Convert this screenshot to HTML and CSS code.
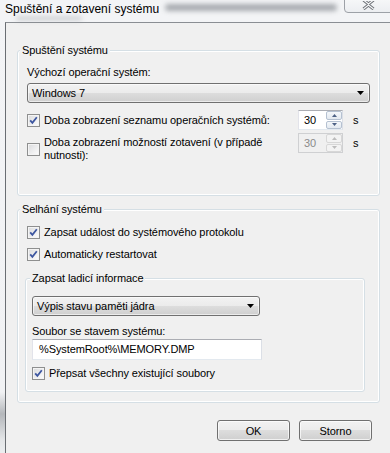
FILE: index.html
```html
<!DOCTYPE html>
<html lang="cs">

<head>
  <meta charset="UTF-8">
  <meta name="viewport" content="width=device-width, initial-scale=1.0">
  <title>Spuštění a zotavení systému</title>
  <link rel="stylesheet" href="styles.css">
</head>

<body>
  <div class="window">
    <div class="titlebar">
      <span class="title">Spuštění a zotavení systému</span>
      <!-- rozmazané okno za průhledným rámem -->
      <span class="glass glass-a"></span>
      <span class="glass glass-b"></span>
      <span class="close-btn">
        <svg width="13" height="9" viewBox="0 0 13 9">
          <path d="M1.5 -1 L6.5 3 L11.5 -1 M1.5 8 L6.5 4 L11.5 8" stroke="#6b6f75" stroke-width="3" fill="none" />
          <path d="M1.5 -1 L6.5 3 L11.5 -1 M1.5 8 L6.5 4 L11.5 8" stroke="#f6f7f8" stroke-width="1.2" fill="none" />
        </svg>
      </span>
    </div>

    <div class="client">
      <!-- Spuštění systému -->
      <fieldset class="group">
        <legend>Spuštění systému</legend>
        <div class="group-body startup">
          <div class="field-label">Výchozí operační systém:</div>
          <div class="combo combo-os">
            <span>Windows 7</span>
            <svg class="combo-arrow" width="7" height="4" viewBox="0 0 7 4"><path d="M0 0h7l-3.5 4z" fill="#000" /></svg>
          </div>

          <div class="timeout-row first">
            <label class="check">
              <span class="box checked">
                <svg width="9" height="9" viewBox="0 0 9 9"><path d="M1.2 4.3 L3.4 6.8 L7.8 1.2" stroke="#3d56a0" stroke-width="1.8" fill="none" /></svg>
              </span>
              <span>Doba zobrazení seznamu operačních systémů:</span>
            </label>
            <div class="spin">
              <span class="spin-value">30</span>
              <span class="spin-btns">
                <span class="spin-btn"><svg width="5" height="3" viewBox="0 0 5 3"><path d="M0 3h5L2.5 0z" fill="#4d6185" /></svg></span>
                <span class="spin-btn"><svg width="5" height="3" viewBox="0 0 5 3"><path d="M0 0h5L2.5 3z" fill="#4d6185" /></svg></span>
              </span>
            </div>
            <span class="unit">s</span>
          </div>

          <div class="timeout-row">
            <label class="check multi">
              <span class="box"></span>
              <span>Doba zobrazení možností zotavení (v případě<br>nutnosti):</span>
            </label>
            <div class="spin disabled">
              <span class="spin-value">30</span>
              <span class="spin-btns">
                <span class="spin-btn"><svg width="5" height="3" viewBox="0 0 5 3"><path d="M0 3h5L2.5 0z" fill="#bcbcbc" /></svg></span>
                <span class="spin-btn"><svg width="5" height="3" viewBox="0 0 5 3"><path d="M0 0h5L2.5 3z" fill="#bcbcbc" /></svg></span>
              </span>
            </div>
            <span class="unit">s</span>
          </div>
        </div>
      </fieldset>

      <!-- Selhání systému -->
      <fieldset class="group failure">
        <legend>Selhání systému</legend>
        <div class="group-body failure-body">
          <label class="check indent">
            <span class="box checked">
              <svg width="9" height="9" viewBox="0 0 9 9"><path d="M1.2 4.3 L3.4 6.8 L7.8 1.2" stroke="#3d56a0" stroke-width="1.8" fill="none" /></svg>
            </span>
            <span>Zapsat událost do systémového protokolu</span>
          </label>
          <label class="check indent second">
            <span class="box checked">
              <svg width="9" height="9" viewBox="0 0 9 9"><path d="M1.2 4.3 L3.4 6.8 L7.8 1.2" stroke="#3d56a0" stroke-width="1.8" fill="none" /></svg>
            </span>
            <span>Automaticky restartovat</span>
          </label>

          <fieldset class="group debug">
            <legend>Zapsat ladicí informace</legend>
            <div class="group-body debug-body">
              <div class="combo combo-dump">
                <span>Výpis stavu paměti jádra</span>
                <svg class="combo-arrow" width="7" height="4" viewBox="0 0 7 4"><path d="M0 0h7l-3.5 4z" fill="#000" /></svg>
              </div>
              <div class="field-label dump-label">Soubor se stavem systému:</div>
              <div class="textbox">%SystemRoot%\MEMORY.DMP</div>
              <label class="check overwrite">
                <span class="box checked">
                  <svg width="9" height="9" viewBox="0 0 9 9"><path d="M1.2 4.3 L3.4 6.8 L7.8 1.2" stroke="#3d56a0" stroke-width="1.8" fill="none" /></svg>
                </span>
                <span>Přepsat všechny existující soubory</span>
              </label>
            </div>
          </fieldset>
        </div>
      </fieldset>

      <div class="buttons">
        <button class="btn">OK</button>
        <button class="btn">Storno</button>
      </div>
    </div>
  </div>
</body>

</html>
```

FILE: styles.css
```css
* {
  margin: 0;
  padding: 0;
  box-sizing: border-box;
}

body {
  font-family: "Liberation Sans", Arial, sans-serif;
  font-size: 11px;
  letter-spacing: -0.1px;
  color: #000;
  background: linear-gradient(to bottom, #f3f4f6 0, #f1f2f4 392px, #b4b7bb 414px, #e4e6e8 440px, #eceef0 453px);
  overflow: hidden;
}

.window {
  height: 453px;
  display: flex;
  flex-direction: column;
}

/* titulek okna */
.titlebar {
  height: 22px;
  position: relative;
  background: #f3f4f6;
}

.title {
  display: block;
  padding-left: 5px;
  line-height: 18px;
  font-size: 12px;
  letter-spacing: 0;
  position: relative;
  z-index: 1;
}

.glass {
  position: absolute;
  background: #8e9298;
  border-radius: 4px;
  filter: blur(2.5px);
}

.glass-a {
  left: 165px;
  top: 4px;
  width: 172px;
  height: 7px;
  opacity: 0.75;
}

.glass-b {
  left: 16px;
  top: 17px;
  width: 66px;
  height: 3px;
  opacity: 0.5;
}

.close-btn {
  position: absolute;
  right: -6px;
  top: -4px;
  width: 52px;
  height: 17px;
  border: 1px solid #9da1a7;
  border-radius: 4px;
  background: linear-gradient(#f8f9fa, #eceef1);
  display: flex;
  justify-content: center;
  padding-top: 4px;
  padding-right: 4px;
}

/* klientská oblast */
.client {
  flex: 1;
  margin-left: 5px;
  border-left: 1px solid #6a6e73;
  border-top: 1px solid #8a8e93;
  background: #f0f0f0;
  padding: 20px 10px 0 11px;
}

.group {
  border: 1px solid #d5dfe5;
  border-radius: 3px;
  box-shadow: inset 0 0 0 1px #fff;
  min-width: 0;
}

.group legend {
  margin-left: 2px;
  padding: 0 2px;
  line-height: 15px;
  background: #f0f0f0;
}

.group-body.startup {
  padding: 7px 9px 33px 9px;
}

.field-label {
  line-height: 15px;
}

.combo {
  height: 20px;
  margin-top: 3px;
  border: 1px solid #707070;
  border-radius: 3px;
  background: linear-gradient(#f2f2f2 0, #ebebeb 50%, #dddddd 50%, #cfcfcf 100%);
  box-shadow: inset 0 0 0 1px rgba(255, 255, 255, 0.6);
  display: flex;
  align-items: center;
  justify-content: space-between;
  padding: 0 5px 0 4px;
  line-height: 16px;
}

.timeout-row {
  display: grid;
  grid-template-columns: 271px 45px 1fr;
  align-items: start;
  margin-top: 3px;
}

.timeout-row.first {
  margin-top: 7px;
  align-items: center;
}

.check {
  display: flex;
  align-items: center;
  gap: 4px;
  line-height: 15px;
}

.check.multi {
  line-height: 13px;
  padding-top: 3px;
  align-items: flex-start;
}

.check.multi .box {
  margin-top: 7px;
}

.box {
  flex: none;
  width: 13px;
  height: 13px;
  border: 1px solid #8e8f8f;
  background: linear-gradient(135deg, #d9dadc 0, #f3f3f4 70%, #fdfdfd 100%);
  box-shadow: inset 0 0 0 1px #f4f4f4;
  display: flex;
  align-items: center;
  justify-content: center;
}

.spin {
  height: 20px;
  border: 1px solid #abadb3;
  border-color: #abadb3 #dbdfe6 #e3e9ef #e2e3ea;
  background: #fff;
  display: flex;
  align-items: center;
  justify-content: space-between;
  padding-left: 5px;
}

.spin-btns {
  display: flex;
  flex-direction: column;
  gap: 1px;
  width: 16px;
  height: 18px;
}

.spin-btn {
  flex: 1;
  border: 1px solid #b5c1d1;
  border-radius: 2px;
  background: linear-gradient(#f4f7fa, #e3e9f0);
  display: flex;
  align-items: center;
  justify-content: center;
}

.spin.disabled {
  background: #f0f0f0;
  border-color: #cfd0d2;
  color: #8a8a8a;
}

.spin.disabled .spin-btn {
  border-color: #d7d7d7;
  background: #f3f3f3;
}

.unit {
  padding-left: 10px;
  line-height: 20px;
}

/* selhání systému */
.group.failure {
  margin-top: 6px;
}

.failure-body {
  padding: 8px 14px 10px 7px;
}

.check.indent {
  margin-left: 2px;
}

.check.second {
  margin-top: 7px;
}

.group.debug {
  margin-top: 9px;
}

.group.debug legend {
  margin-left: 4px;
}

.debug-body {
  padding: 10px 102px 10px 6px;
}

.combo-dump {
  margin-top: 0;
  margin-right: 2px;
}

.dump-label {
  margin-top: 8px;
}

.textbox {
  height: 21px;
  border: 1px solid #abadb3;
  border-color: #abadb3 #dbdfe6 #e3e9ef #e2e3ea;
  background: #fff;
  padding-left: 6px;
  line-height: 19px;
}

.check.overwrite {
  margin-top: 6px;
}

/* tlačítka */
.buttons {
  display: flex;
  justify-content: flex-end;
  gap: 9px;
  margin-top: 17px;
  padding-right: 8px;
}

.btn {
  width: 73px;
  height: 21px;
  font: inherit;
  letter-spacing: inherit;
  border: 1px solid #707070;
  border-radius: 3px;
  background: linear-gradient(#f2f2f2 0, #ebebeb 50%, #dddddd 50%, #cfcfcf 100%);
  box-shadow: inset 0 0 0 1px rgba(255, 255, 255, 0.7);
  color: #000;
}
```
